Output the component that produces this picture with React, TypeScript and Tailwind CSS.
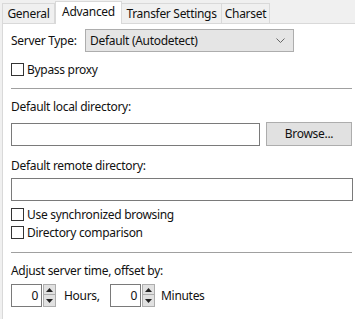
import React from "react";

const font = { fontFamily: '"Noto Sans", "Segoe UI", Arial, sans-serif' };

function Checkbox({ label }: { label: string }) {
  return (
    <div className="flex items-center h-[13px]">
      <div className="w-[13px] h-[13px] border border-[#333333] bg-white shrink-0" />
      <span className="ml-[3px] leading-[16px] whitespace-nowrap">{label}</span>
    </div>
  );
}

function Spin() {
  return (
    <div className="flex h-[23px] items-stretch">
      <div className="w-[31px] h-[23px] border border-[#7a7a7a] bg-white flex items-center justify-end pr-[3px] leading-[16px]">
        0
      </div>
      <div className="ml-[1px] w-[13px] flex flex-col">
        <div className="h-[11px] border border-[#adadad] bg-[#e1e1e1] flex items-center justify-center">
          <svg width="7" height="4" viewBox="0 0 7 4">
            <path d="M0 4 L3.5 0 L7 4 Z" fill="#222" />
          </svg>
        </div>
        <div className="h-[12px] border border-t-0 border-[#adadad] bg-[#e1e1e1] flex items-center justify-center">
          <svg width="7" height="4" viewBox="0 0 7 4">
            <path d="M0 0 L3.5 4 L7 0 Z" fill="#222" />
          </svg>
        </div>
      </div>
    </div>
  );
}

export default function App() {
  return (
    <div
      className="w-[355px] h-[319px] bg-[#f0f0f0] overflow-hidden text-[12px] tracking-[-0.3px] text-[#111111] relative"
      style={font}
    >
      {/* Tabs */}
      <div className="flex items-end h-[23px] pl-[2px] relative z-10">
        <div className="w-[53px] h-[20px] border border-b-0 border-[#d9d9d9] bg-[#f0f0f0] flex items-center justify-center leading-[16px]">
          General
        </div>
        <div className="w-[67px] h-[23px] border border-b-0 border-[#d9d9d9] bg-white flex items-start justify-center pt-[2px] leading-[16px] -mb-px">
          Advanced
        </div>
        <div className="w-[100px] h-[20px] border border-l-0 border-b-0 border-[#d9d9d9] bg-[#f0f0f0] flex items-center justify-center leading-[16px] whitespace-nowrap">
          Transfer Settings
        </div>
        <div className="w-[48px] h-[20px] border border-l-0 border-b-0 border-[#d9d9d9] bg-[#f0f0f0] flex items-center justify-center leading-[16px]">
          Charset
        </div>
      </div>

      {/* Panel */}
      <div className="ml-[2px] h-[296px] border-l border-t border-[#d9d9d9] bg-white pl-[8px] pr-[2px] pt-[5px] flex flex-col">
        <div className="flex items-center h-[23px]">
          <span className="w-[74px] leading-[16px]">Server Type:</span>
          <div className="w-[209px] h-[23px] border border-[#adadad] bg-[#e5e5e5] flex items-center pl-[4px] pr-[8px]">
            <span className="flex-1 leading-[16px]">Default (Autodetect)</span>
            <svg width="9" height="5" viewBox="0 0 9 5">
              <path d="M0.5 0.5 L4.5 4.5 L8.5 0.5" fill="none" stroke="#666" strokeWidth="1" />
            </svg>
          </div>
        </div>

        <div className="mt-[11px]">
          <Checkbox label="Bypass proxy" />
        </div>

        <div className="mt-[12px] h-px bg-[#a0a0a0] mr-[1px]" />

        <div className="mt-[10px] leading-[16px]">Default local directory:</div>
        <div className="mt-[7px] flex items-center">
          <div className="w-[249px] h-[23px] border border-[#7a7a7a] bg-white" />
          <div className="ml-[6px] w-[86px] h-[24px] border border-[#adadad] bg-[#e1e1e1] flex items-center justify-center leading-[16px]">
            Browse...
          </div>
        </div>

        <div className="mt-[12px] leading-[16px]">Default remote directory:</div>
        <div className="mt-[4px] w-[342px] h-[23px] border border-[#7a7a7a] bg-white" />

        <div className="mt-[7px]">
          <Checkbox label="Use synchronized browsing" />
        </div>
        <div className="mt-[5px]">
          <Checkbox label="Directory comparison" />
        </div>

        <div className="mt-[13px] h-px bg-[#a0a0a0] mr-[1px]" />

        <div className="mt-[10px] leading-[16px]">Adjust server time, offset by:</div>
        <div className="mt-[5px] flex items-center">
          <Spin />
          <span className="ml-[8px] w-[46px] leading-[16px]">Hours,</span>
          <Spin />
          <span className="ml-[6px] leading-[16px]">Minutes</span>
        </div>
      </div>
    </div>
  );
}
